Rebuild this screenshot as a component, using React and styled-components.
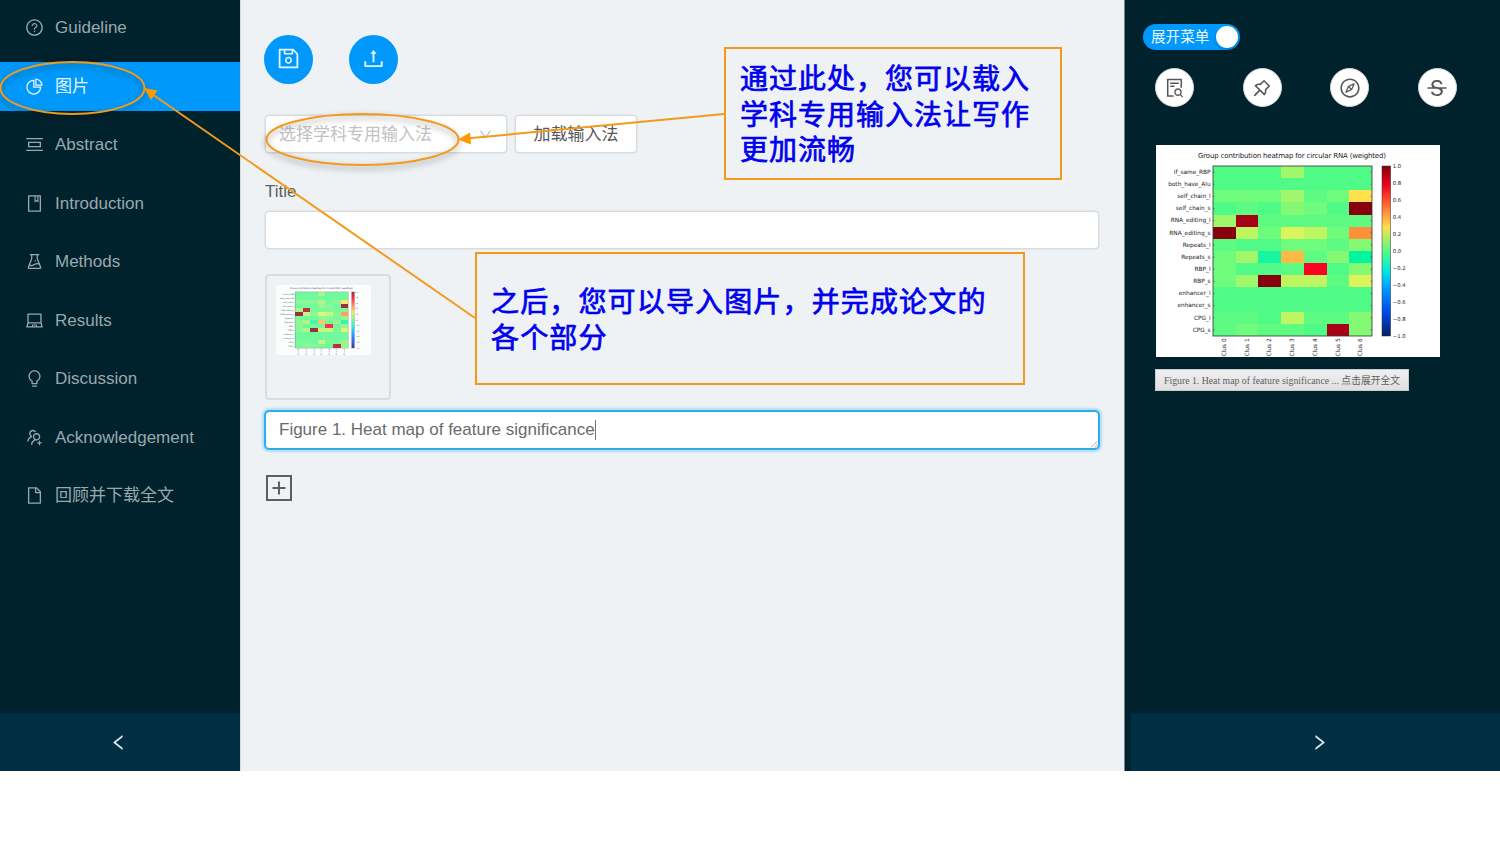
import React from "react";
import styled, { createGlobalStyle } from "styled-components";
import {
  AiOutlineQuestionCircle,
  AiOutlinePieChart,
  AiOutlinePicCenter,
  AiOutlineBook,
  AiOutlineExperiment,
  AiOutlineLaptop,
  AiOutlineBulb,
  AiOutlineUsergroupAdd,
  AiOutlineFile,
  AiOutlineSave,
  AiOutlineUpload,
  AiOutlineDown,
  AiOutlineLeft,
  AiOutlineRight,
  AiOutlineFileSearch,
  AiOutlinePushpin,
  AiOutlineCompass,
  AiOutlineStrikethrough,
} from "react-icons/ai";

const sans = `"Liberation Sans", "Noto Sans CJK SC", sans-serif`;
const orange = "#f39a1c";

const GlobalStyle = createGlobalStyle`
  * { box-sizing: border-box; }
  body { margin: 0; background: #fff; font-family: ${sans}; overflow: hidden; }
`;

const Page = styled.div`
  position: relative;
  width: 1500px;
  height: 844px;
  background: #fff;
`;

const Shell = styled.div`
  display: flex;
  height: 771px;
`;

const Sidebar = styled.aside`
  display: flex;
  flex-direction: column;
  width: 240px;
  background: #00222d;
`;

const Menu = styled.nav`
  display: flex;
  flex-direction: column;
  flex: 1;
  gap: 9.8px;
  padding-top: 3.4px;
`;

const MenuItem = styled.a`
  display: flex;
  align-items: center;
  gap: 11px;
  height: 48.7px;
  padding-left: 25px;
  font-size: 17px;
  line-height: 24px;
  color: ${(p) => (p.$active ? "#e9f7ff" : "#9aa8ad")};
  background: ${(p) => (p.$active ? "#0099fb" : "transparent")};
  svg { width: 19px; height: 19px; flex: none; }
  span { padding-top: 1px; }
`;

const Collapse = styled.button`
  display: flex;
  align-items: center;
  justify-content: center;
  height: 58px;
  margin: 0 0 0 ${(p) => p.$inset || 0}px;
  padding: 0 ${(p) => p.$right || 0}px 0 ${(p) => p.$left || 0}px;
  border: 0;
  color: #e8eef0;
  background: #002e42;
  svg { width: 19px; height: 19px; stroke: currentColor; stroke-width: 18; }
`;

const Main = styled.main`
  display: flex;
  flex-direction: column;
  align-items: flex-start;
  width: 884px;
  padding: 35px 24px 0 24px;
  color: #5c5f61;
  background: #eef2f5;
  border-left: 1px solid #d4dce1;
`;

const Actions = styled.div`
  display: flex;
  gap: 36px;
  height: 49px;
  margin-left: -1px;
`;

const PrimaryRound = styled.button`
  display: grid;
  place-items: center;
  width: 49px;
  height: 49px;
  padding: 0 0 2px;
  border: 0;
  border-radius: 50%;
  color: #e9f7ff;
  background: #0099fb;
  svg { width: 25px; height: 25px; }
`;

const MethodRow = styled.div`
  display: flex;
  gap: 8px;
  height: 38px;
  margin-top: 31px;
`;

const Select = styled.div`
  display: flex;
  align-items: center;
  justify-content: space-between;
  width: 242px;
  padding: 0 13px;
  font-size: 17px;
  color: #c0c2c3;
  background: #fff;
  border: 1px solid #d9dbdd;
  border-radius: 4px;
  box-shadow: 0 0 0 0.5px #d9dbdd;
  span { padding-bottom: 3px; }
  svg { width: 15px; height: 15px; }
`;

const Button = styled.button`
  width: 122px;
  padding: 0 0 3px;
  font: 17px ${sans};
  color: #58595a;
  background: #fff;
  border: 1px solid #d9dbdd;
  border-radius: 4px;
  box-shadow: 0 0 0 0.5px #d9dbdd;
`;

const Label = styled.label`
  height: 20px;
  margin-top: 29px;
  font-size: 17px;
  line-height: 20px;
`;

const Field = styled.div`
  display: flex;
  align-items: center;
  justify-content: space-between;
  width: 834px;
  height: 38px;
  margin-top: ${(p) => p.$top}px;
  padding-left: 13px;
  font-size: 17px;
  color: #6a6b6c;
  background: #fff;
  border: ${(p) => (p.$focus ? "1px solid #27a9ea" : "1px solid #d9dbdd")};
  border-radius: 4px;
  box-shadow: ${(p) => (p.$focus ? "0 0 0 1px #35b0ee, 0 0 2px 3px #b4dff8" : "0 0 0 0.5px #d9dbdd")};
`;

const Value = styled.span`
  display: flex;
  align-items: center;
  height: 20px;
  border-right: 1px solid #777;
`;

const Grip = styled.svg`
  align-self: flex-end;
  width: 7px;
  height: 7px;
`;

const Upload = styled.div`
  width: 126px;
  height: 126px;
  margin-top: 25px;
  padding: 9px;
  border: 2px solid #d9dcdf;
  border-radius: 4px;
  svg { display: block; width: 95px; height: 70px; opacity: 0.8; }
`;

const AddButton = styled.button`
  display: block;
  width: 26px;
  height: 26px;
  margin: 26px 0 0 1px;
  padding: 0;
  border: 0;
  background: none;
  svg { display: block; }
`;

const Preview = styled.aside`
  display: flex;
  flex-direction: column;
  width: 376px;
  background: #00222d;
  border-left: 1px solid #6f858f;
`;

const PreviewBody = styled.div`
  display: flex;
  flex: 1;
  flex-direction: column;
  align-items: flex-start;
  padding: 24px 0 0 18px;
`;

const Switch = styled.div`
  display: flex;
  align-items: center;
  justify-content: space-between;
  width: 97px;
  height: 26px;
  padding: 0 2px 0 8px;
  font-size: 14.6px;
  color: #e9f7ff;
  background: #0099fb;
  border-radius: 13px;
  span { line-height: 20px; margin-top: -1px; }
`;

const Knob = styled.i`
  width: 22px;
  height: 22px;
  border-radius: 50%;
  background: #fff;
  box-shadow: 0 2px 4px rgba(0, 35, 70, 0.25);
`;

const Tools = styled.div`
  display: flex;
  gap: 48.6px;
  margin: 18px 0 0 12px;
`;

const Tool = styled.button`
  display: grid;
  place-items: center;
  width: 39px;
  height: 39px;
  padding: 0;
  border: 1px solid #d5dadc;
  border-radius: 50%;
  color: #55585a;
  background: #fff;
  svg { width: 22px; height: 22px; }
`;

const Figure = styled.div`
  width: 284px;
  height: 212px;
  margin: 38px 0 0 13px;
  svg { display: block; width: 284px; height: 212px; }
`;

const Caption = styled.button`
  width: 254px;
  height: 22px;
  margin: 12px 0 0 12px;
  padding: 0 0 1px;
  font: 9.78px "Liberation Serif", "Noto Sans CJK SC", serif;
  white-space: nowrap;
  color: #5f6061;
  background: linear-gradient(#f0f0f0, #dfdfdf);
  border: 1px solid #c9cccd;
`;

const Callout = styled.div`
  position: absolute;
  left: ${(p) => p.$x}px;
  top: ${(p) => p.$y}px;
  display: flex;
  align-items: center;
  width: ${(p) => p.$w}px;
  height: ${(p) => p.$h}px;
  padding: 4px 0 0 14px;
  font-size: 28px;
  line-height: 35.4px;
  letter-spacing: ${(p) => p.$spacing}px;
  white-space: pre;
  color: #0000ee;
  -webkit-text-stroke: 0.7px #0000ee;
  background: #eef2f5;
  border: 2px solid ${orange};
`;

const Marks = styled.svg`
  position: absolute;
  inset: 0;
  pointer-events: none;
  ellipse, line { fill: none; stroke: ${orange}; stroke-width: 2; }
  ellipse { filter: drop-shadow(0 3px 3px rgba(0, 0, 0, 0.4)); }
  polygon { fill: #ff9900; }
`;

const menu = [
  [AiOutlineQuestionCircle, "Guideline"],
  [AiOutlinePieChart, "图片"],
  [AiOutlinePicCenter, "Abstract"],
  [AiOutlineBook, "Introduction"],
  [AiOutlineExperiment, "Methods"],
  [AiOutlineLaptop, "Results"],
  [AiOutlineBulb, "Discussion"],
  [AiOutlineUsergroupAdd, "Acknowledgement"],
  [AiOutlineFile, "回顾并下载全文"],
];

const tones = {
  a: "#50fa87", b: "#5efb82", c: "#6ffb7c", d: "#84f973", e: "#a0f76b",
  f: "#bdf660", g: "#dcf45b", y: "#ffe04d", o: "#ffba45", p: "#ff9038",
  t: "#18f5a0", u: "#00f7a0", r: "#ff0022", R: "#a80016", D: "#86000e",
};

const rows = [
  ["if_same_RBP", "aaaeaaa"],
  ["both_have_Alu", "aaaaaaa"],
  ["self_chain_l", "cccebcy"],
  ["self_chain_s", "abadcaD"],
  ["RNA_editing_l", "eRbbbbb"],
  ["RNA_editing_s", "Dfcgfcp"],
  ["Repeats_l", "baaccbd"],
  ["Repeats_s", "cetobdu"],
  ["RBP_l", "caabrad"],
  ["RBP_s", "ceDffbg"],
  ["enhancer_l", "aaaaaaa"],
  ["enhancer_s", "aaaaaaa"],
  ["CPG_l", "bbafbbd"],
  ["CPG_s", "bcbbaRd"],
];

const scale = ["1.0", "0.8", "0.6", "0.4", "0.2", "0.0", "−0.2", "−0.4", "−0.6", "−0.8", "−1.0"];

function Heatmap({ id }) {
  const cw = 159 / 7;
  const rh = 170 / 14;
  return (
    <svg viewBox="0 0 284 212" fontFamily="DejaVu Sans, sans-serif" fill="#222" preserveAspectRatio="none">
      <defs>
        <linearGradient id={id} x1="0" y1="0" x2="0" y2="1">
          <stop offset="0" stopColor="#80000c" />
          <stop offset="0.11" stopColor="#f0001c" />
          <stop offset="0.22" stopColor="#ff6030" />
          <stop offset="0.36" stopColor="#ffe04d" />
          <stop offset="0.5" stopColor="#55fa85" />
          <stop offset="0.62" stopColor="#00e8e0" />
          <stop offset="0.7" stopColor="#00a8ff" />
          <stop offset="0.86" stopColor="#0048ee" />
          <stop offset="1" stopColor="#002060" />
        </linearGradient>
      </defs>
      <rect width="284" height="212" fill="#fff" />
      <text x="42" y="12.8" fontSize="7" textLength="188">Group contribution heatmap for circular RNA (weighted)</text>
      {rows.map(([name, cells], r) => (
        <g key={name}>
          <text x="54.6" y={21 + rh * (r + 0.5) + 1.8} fontSize="5.8" textAnchor="end">{name}</text>
          {[...cells].map((t, c) => (
            <rect key={c} x={57 + c * cw} y={21 + r * rh} width={cw + 0.2} height={rh + 0.2} fill={tones[t]} shapeRendering="crispEdges" />
          ))}
          <path d={`M57 ${21 + rh * (r + 0.5)}h1.5M216 ${21 + rh * (r + 0.5)}h-1.5`} stroke="#333" strokeWidth="0.5" />
        </g>
      ))}
      <rect x="57" y="21" width="159" height="170" fill="none" stroke="#333" strokeWidth="0.8" />
      {[0, 1, 2, 3, 4, 5, 6].map((c) => (
        <text key={c} transform={`translate(${57 + cw * (c + 0.5) + 1.6} 211.5) rotate(-90)`} fontSize="5.9">Clus {c}</text>
      ))}
      <rect x="226" y="21" width="8.6" height="170" fill={`url(#${id})`} stroke="#333" strokeWidth="0.5" />
      {scale.map((s, i) => (
        <text key={s} x="236.8" y={23 + i * 17} fontSize="5.3">{s}</text>
      ))}
    </svg>
  );
}

export default function App() {
  return (
    <>
      <GlobalStyle />
      <Page>
        <Shell>
          <Sidebar>
            <Menu>
              {menu.map(([Icon, text], i) => (
                <MenuItem key={text} $active={i === 1}>
                  <Icon />
                  <span>{text}</span>
                </MenuItem>
              ))}
            </Menu>
            <Collapse $right={3}><AiOutlineLeft /></Collapse>
          </Sidebar>

          <Main>
            <Actions>
              <PrimaryRound><AiOutlineSave /></PrimaryRound>
              <PrimaryRound><AiOutlineUpload /></PrimaryRound>
            </Actions>
            <MethodRow>
              <Select><span>选择学科专用输入法</span><AiOutlineDown /></Select>
              <Button>加载输入法</Button>
            </MethodRow>
            <Label>Title</Label>
            <Field $top={9} />
            <Upload><Heatmap id="thumb-scale" /></Upload>
            <Field $top={11} $focus>
              <Value>Figure 1. Heat map of feature significance</Value>
              <Grip viewBox="0 0 7 7" stroke="#999" strokeWidth="0.8"><path d="M0 6.5L6.5 0M3.5 6.5L6.5 3.5" /></Grip>
            </Field>
            <AddButton>
              <svg width="26" height="26" fill="none" stroke="#5c5f61" strokeWidth="2">
                <path d="M1 1h24v24H1zM6.5 13h13M13 6.5v13" />
              </svg>
            </AddButton>
          </Main>

          <Preview>
            <PreviewBody>
              <Switch><span>展开菜单</span><Knob /></Switch>
              <Tools>
                <Tool><AiOutlineFileSearch /></Tool>
                <Tool><AiOutlinePushpin /></Tool>
                <Tool><AiOutlineCompass /></Tool>
                <Tool><AiOutlineStrikethrough /></Tool>
              </Tools>
              <Figure><Heatmap id="figure-scale" /></Figure>
              <Caption>Figure 1. Heat map of feature significance ... 点击展开全文</Caption>
            </PreviewBody>
            <Collapse $inset={6} $left={7}><AiOutlineRight /></Collapse>
          </Preview>
        </Shell>

        <Callout $x={724} $y={47} $w={338} $h={133} $spacing={1}>{"通过此处，您可以载入\n学科专用输入法让写作\n更加流畅"}</Callout>
        <Callout $x={475} $y={252} $w={550} $h={133} $spacing={1.15}>{"之后，您可以导入图片，并完成论文的\n各个部分"}</Callout>
        <Marks width="1500" height="844">
          <ellipse cx="72.5" cy="88" rx="72" ry="26" />
          <line x1="475" y1="318" x2="152" y2="94" />
          <polygon points="144,88 157.5,90.5 151,100" />
          <ellipse cx="362.5" cy="139.5" rx="96" ry="25.5" />
          <line x1="724" y1="114" x2="466" y2="138.6" />
          <polygon points="458,139.4 470,132.5 471,144.5" />
        </Marks>
      </Page>
    </>
  );
}
